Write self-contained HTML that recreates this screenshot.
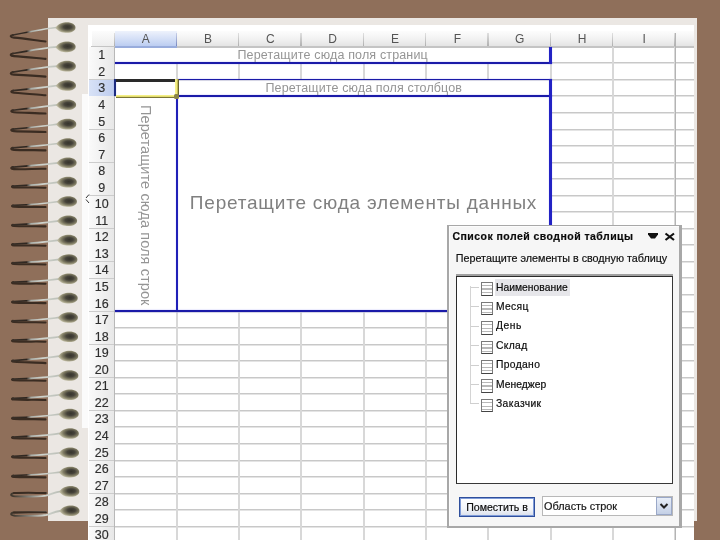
<!DOCTYPE html>
<html><head><meta charset="utf-8"><style>
html,body{margin:0;padding:0;}
body{width:720px;height:540px;overflow:hidden;position:relative;background:#8f6f5a;font-family:"Liberation Sans", sans-serif;}
.a{position:absolute;}
.t{position:absolute;white-space:nowrap;filter:grayscale(1);}
.tx{-webkit-text-stroke:0.2px #111;}
</style></head><body>

<div class="a" style="left:48px;top:18px;width:648.5px;height:502.5px;background:#ebe7e3;"></div>
<div class="a" style="left:82px;top:94px;width:8px;height:334px;background:#fbfbfb;"></div>
<div class="a" style="left:88px;top:25px;width:606px;height:515px;background:#ffffff;"></div>
<div class="a" style="left:92px;top:31px;width:22.50px;height:15.80px;background:linear-gradient(#fcfcfc,#ececec);"></div>
<div class="a" style="left:91px;top:46.3px;width:23.50px;height:1.7px;background:#c4c4c4;"></div>
<div class="a" style="left:114.50px;top:31px;width:62.33px;height:15.80px;background:linear-gradient(#eef2fc,#c9d7f4 70%,#b8caf0);"></div>
<div class="a" style="left:114.50px;top:46.3px;width:62.33px;height:1.7px;background:#98acdc;"></div>
<div class="t" style="left:114.50px;top:31.5px;width:62.33px;text-align:center;font-size:12px;line-height:15px;color:#555;">A</div>
<div class="a" style="left:176.83px;top:31px;width:62.33px;height:15.80px;background:linear-gradient(#fdfdfd,#f2f2f2 50%,#e2e2e2);"></div>
<div class="a" style="left:176.83px;top:46.3px;width:62.33px;height:1.7px;background:#c4c4c4;"></div>
<div class="t" style="left:176.83px;top:31.5px;width:62.33px;text-align:center;font-size:12px;line-height:15px;color:#555;">B</div>
<div class="a" style="left:239.16px;top:31px;width:62.33px;height:15.80px;background:linear-gradient(#fdfdfd,#f2f2f2 50%,#e2e2e2);"></div>
<div class="a" style="left:239.16px;top:46.3px;width:62.33px;height:1.7px;background:#c4c4c4;"></div>
<div class="t" style="left:239.16px;top:31.5px;width:62.33px;text-align:center;font-size:12px;line-height:15px;color:#555;">C</div>
<div class="a" style="left:301.49px;top:31px;width:62.33px;height:15.80px;background:linear-gradient(#fdfdfd,#f2f2f2 50%,#e2e2e2);"></div>
<div class="a" style="left:301.49px;top:46.3px;width:62.33px;height:1.7px;background:#c4c4c4;"></div>
<div class="t" style="left:301.49px;top:31.5px;width:62.33px;text-align:center;font-size:12px;line-height:15px;color:#555;">D</div>
<div class="a" style="left:363.82px;top:31px;width:62.33px;height:15.80px;background:linear-gradient(#fdfdfd,#f2f2f2 50%,#e2e2e2);"></div>
<div class="a" style="left:363.82px;top:46.3px;width:62.33px;height:1.7px;background:#c4c4c4;"></div>
<div class="t" style="left:363.82px;top:31.5px;width:62.33px;text-align:center;font-size:12px;line-height:15px;color:#555;">E</div>
<div class="a" style="left:426.15px;top:31px;width:62.33px;height:15.80px;background:linear-gradient(#fdfdfd,#f2f2f2 50%,#e2e2e2);"></div>
<div class="a" style="left:426.15px;top:46.3px;width:62.33px;height:1.7px;background:#c4c4c4;"></div>
<div class="t" style="left:426.15px;top:31.5px;width:62.33px;text-align:center;font-size:12px;line-height:15px;color:#555;">F</div>
<div class="a" style="left:488.48px;top:31px;width:62.33px;height:15.80px;background:linear-gradient(#fdfdfd,#f2f2f2 50%,#e2e2e2);"></div>
<div class="a" style="left:488.48px;top:46.3px;width:62.33px;height:1.7px;background:#c4c4c4;"></div>
<div class="t" style="left:488.48px;top:31.5px;width:62.33px;text-align:center;font-size:12px;line-height:15px;color:#555;">G</div>
<div class="a" style="left:550.81px;top:31px;width:62.33px;height:15.80px;background:linear-gradient(#fdfdfd,#f2f2f2 50%,#e2e2e2);"></div>
<div class="a" style="left:550.81px;top:46.3px;width:62.33px;height:1.7px;background:#c4c4c4;"></div>
<div class="t" style="left:550.81px;top:31.5px;width:62.33px;text-align:center;font-size:12px;line-height:15px;color:#555;">H</div>
<div class="a" style="left:613.14px;top:31px;width:62.33px;height:15.80px;background:linear-gradient(#fdfdfd,#f2f2f2 50%,#e2e2e2);"></div>
<div class="a" style="left:613.14px;top:46.3px;width:62.33px;height:1.7px;background:#c4c4c4;"></div>
<div class="t" style="left:613.14px;top:31.5px;width:62.33px;text-align:center;font-size:12px;line-height:15px;color:#555;">I</div>
<div class="a" style="left:675.47px;top:31px;width:18.53px;height:15.80px;background:linear-gradient(#fdfdfd,#f2f2f2 50%,#e2e2e2);"></div>
<div class="a" style="left:675.47px;top:46.3px;width:18.53px;height:1.7px;background:#c4c4c4;"></div>
<div class="a" style="left:113.50px;top:33px;width:1.2px;height:12.80px;background:linear-gradient(#e0e0e0,#b0b0b0);"></div>
<div class="a" style="left:175.83px;top:33px;width:1.2px;height:12.80px;background:linear-gradient(#c8d0e8,#7888c0);"></div>
<div class="a" style="left:238.16px;top:33px;width:1.2px;height:12.80px;background:linear-gradient(#e0e0e0,#b0b0b0);"></div>
<div class="a" style="left:300.49px;top:33px;width:1.2px;height:12.80px;background:linear-gradient(#e0e0e0,#b0b0b0);"></div>
<div class="a" style="left:362.82px;top:33px;width:1.2px;height:12.80px;background:linear-gradient(#e0e0e0,#b0b0b0);"></div>
<div class="a" style="left:425.15px;top:33px;width:1.2px;height:12.80px;background:linear-gradient(#e0e0e0,#b0b0b0);"></div>
<div class="a" style="left:487.48px;top:33px;width:1.2px;height:12.80px;background:linear-gradient(#e0e0e0,#b0b0b0);"></div>
<div class="a" style="left:549.81px;top:33px;width:1.2px;height:12.80px;background:linear-gradient(#e0e0e0,#b0b0b0);"></div>
<div class="a" style="left:612.14px;top:33px;width:1.2px;height:12.80px;background:linear-gradient(#e0e0e0,#b0b0b0);"></div>
<div class="a" style="left:674.47px;top:33px;width:1.2px;height:12.80px;background:linear-gradient(#e0e0e0,#b0b0b0);"></div>
<div class="a" style="left:89px;top:46.80px;width:25.50px;height:16.55px;background:linear-gradient(90deg,#fafafa,#e7e7e7);"></div>
<div class="a" style="left:89px;top:62.85px;width:25.50px;height:1.3px;background:#cccccc;"></div>
<div class="t" style="left:89px;top:47.30px;width:25.50px;text-align:center;font-size:12.5px;line-height:16px;color:#2e2e2e;-webkit-text-stroke:0.15px #2e2e2e;">1</div>
<div class="a" style="left:89px;top:63.35px;width:25.50px;height:16.55px;background:linear-gradient(90deg,#fafafa,#e7e7e7);"></div>
<div class="a" style="left:89px;top:79.40px;width:25.50px;height:1.3px;background:#cccccc;"></div>
<div class="t" style="left:89px;top:63.85px;width:25.50px;text-align:center;font-size:12.5px;line-height:16px;color:#2e2e2e;-webkit-text-stroke:0.15px #2e2e2e;">2</div>
<div class="a" style="left:89px;top:79.90px;width:25.50px;height:16.55px;background:linear-gradient(90deg,#d8e2f6,#bccbee);"></div>
<div class="a" style="left:89px;top:95.95px;width:25.50px;height:1.3px;background:#8fa3d6;"></div>
<div class="t" style="left:89px;top:80.40px;width:25.50px;text-align:center;font-size:12.5px;line-height:16px;color:#2e2e2e;-webkit-text-stroke:0.15px #2e2e2e;">3</div>
<div class="a" style="left:89px;top:96.45px;width:25.50px;height:16.55px;background:linear-gradient(90deg,#fafafa,#e7e7e7);"></div>
<div class="a" style="left:89px;top:112.50px;width:25.50px;height:1.3px;background:#cccccc;"></div>
<div class="t" style="left:89px;top:96.95px;width:25.50px;text-align:center;font-size:12.5px;line-height:16px;color:#2e2e2e;-webkit-text-stroke:0.15px #2e2e2e;">4</div>
<div class="a" style="left:89px;top:113.00px;width:25.50px;height:16.55px;background:linear-gradient(90deg,#fafafa,#e7e7e7);"></div>
<div class="a" style="left:89px;top:129.05px;width:25.50px;height:1.3px;background:#cccccc;"></div>
<div class="t" style="left:89px;top:113.50px;width:25.50px;text-align:center;font-size:12.5px;line-height:16px;color:#2e2e2e;-webkit-text-stroke:0.15px #2e2e2e;">5</div>
<div class="a" style="left:89px;top:129.55px;width:25.50px;height:16.55px;background:linear-gradient(90deg,#fafafa,#e7e7e7);"></div>
<div class="a" style="left:89px;top:145.60px;width:25.50px;height:1.3px;background:#cccccc;"></div>
<div class="t" style="left:89px;top:130.05px;width:25.50px;text-align:center;font-size:12.5px;line-height:16px;color:#2e2e2e;-webkit-text-stroke:0.15px #2e2e2e;">6</div>
<div class="a" style="left:89px;top:146.10px;width:25.50px;height:16.55px;background:linear-gradient(90deg,#fafafa,#e7e7e7);"></div>
<div class="a" style="left:89px;top:162.15px;width:25.50px;height:1.3px;background:#cccccc;"></div>
<div class="t" style="left:89px;top:146.60px;width:25.50px;text-align:center;font-size:12.5px;line-height:16px;color:#2e2e2e;-webkit-text-stroke:0.15px #2e2e2e;">7</div>
<div class="a" style="left:89px;top:162.65px;width:25.50px;height:16.55px;background:linear-gradient(90deg,#fafafa,#e7e7e7);"></div>
<div class="a" style="left:89px;top:178.70px;width:25.50px;height:1.3px;background:#cccccc;"></div>
<div class="t" style="left:89px;top:163.15px;width:25.50px;text-align:center;font-size:12.5px;line-height:16px;color:#2e2e2e;-webkit-text-stroke:0.15px #2e2e2e;">8</div>
<div class="a" style="left:89px;top:179.20px;width:25.50px;height:16.55px;background:linear-gradient(90deg,#fafafa,#e7e7e7);"></div>
<div class="a" style="left:89px;top:195.25px;width:25.50px;height:1.3px;background:#cccccc;"></div>
<div class="t" style="left:89px;top:179.70px;width:25.50px;text-align:center;font-size:12.5px;line-height:16px;color:#2e2e2e;-webkit-text-stroke:0.15px #2e2e2e;">9</div>
<div class="a" style="left:89px;top:195.75px;width:25.50px;height:16.55px;background:linear-gradient(90deg,#fafafa,#e7e7e7);"></div>
<div class="a" style="left:89px;top:211.80px;width:25.50px;height:1.3px;background:#cccccc;"></div>
<div class="t" style="left:89px;top:196.25px;width:25.50px;text-align:center;font-size:12.5px;line-height:16px;color:#2e2e2e;-webkit-text-stroke:0.15px #2e2e2e;">10</div>
<div class="a" style="left:89px;top:212.30px;width:25.50px;height:16.55px;background:linear-gradient(90deg,#fafafa,#e7e7e7);"></div>
<div class="a" style="left:89px;top:228.35px;width:25.50px;height:1.3px;background:#cccccc;"></div>
<div class="t" style="left:89px;top:212.80px;width:25.50px;text-align:center;font-size:12.5px;line-height:16px;color:#2e2e2e;-webkit-text-stroke:0.15px #2e2e2e;">11</div>
<div class="a" style="left:89px;top:228.85px;width:25.50px;height:16.55px;background:linear-gradient(90deg,#fafafa,#e7e7e7);"></div>
<div class="a" style="left:89px;top:244.90px;width:25.50px;height:1.3px;background:#cccccc;"></div>
<div class="t" style="left:89px;top:229.35px;width:25.50px;text-align:center;font-size:12.5px;line-height:16px;color:#2e2e2e;-webkit-text-stroke:0.15px #2e2e2e;">12</div>
<div class="a" style="left:89px;top:245.40px;width:25.50px;height:16.55px;background:linear-gradient(90deg,#fafafa,#e7e7e7);"></div>
<div class="a" style="left:89px;top:261.45px;width:25.50px;height:1.3px;background:#cccccc;"></div>
<div class="t" style="left:89px;top:245.90px;width:25.50px;text-align:center;font-size:12.5px;line-height:16px;color:#2e2e2e;-webkit-text-stroke:0.15px #2e2e2e;">13</div>
<div class="a" style="left:89px;top:261.95px;width:25.50px;height:16.55px;background:linear-gradient(90deg,#fafafa,#e7e7e7);"></div>
<div class="a" style="left:89px;top:278.00px;width:25.50px;height:1.3px;background:#cccccc;"></div>
<div class="t" style="left:89px;top:262.45px;width:25.50px;text-align:center;font-size:12.5px;line-height:16px;color:#2e2e2e;-webkit-text-stroke:0.15px #2e2e2e;">14</div>
<div class="a" style="left:89px;top:278.50px;width:25.50px;height:16.55px;background:linear-gradient(90deg,#fafafa,#e7e7e7);"></div>
<div class="a" style="left:89px;top:294.55px;width:25.50px;height:1.3px;background:#cccccc;"></div>
<div class="t" style="left:89px;top:279.00px;width:25.50px;text-align:center;font-size:12.5px;line-height:16px;color:#2e2e2e;-webkit-text-stroke:0.15px #2e2e2e;">15</div>
<div class="a" style="left:89px;top:295.05px;width:25.50px;height:16.55px;background:linear-gradient(90deg,#fafafa,#e7e7e7);"></div>
<div class="a" style="left:89px;top:311.10px;width:25.50px;height:1.3px;background:#cccccc;"></div>
<div class="t" style="left:89px;top:295.55px;width:25.50px;text-align:center;font-size:12.5px;line-height:16px;color:#2e2e2e;-webkit-text-stroke:0.15px #2e2e2e;">16</div>
<div class="a" style="left:89px;top:311.60px;width:25.50px;height:16.55px;background:linear-gradient(90deg,#fafafa,#e7e7e7);"></div>
<div class="a" style="left:89px;top:327.65px;width:25.50px;height:1.3px;background:#cccccc;"></div>
<div class="t" style="left:89px;top:312.10px;width:25.50px;text-align:center;font-size:12.5px;line-height:16px;color:#2e2e2e;-webkit-text-stroke:0.15px #2e2e2e;">17</div>
<div class="a" style="left:89px;top:328.15px;width:25.50px;height:16.55px;background:linear-gradient(90deg,#fafafa,#e7e7e7);"></div>
<div class="a" style="left:89px;top:344.20px;width:25.50px;height:1.3px;background:#cccccc;"></div>
<div class="t" style="left:89px;top:328.65px;width:25.50px;text-align:center;font-size:12.5px;line-height:16px;color:#2e2e2e;-webkit-text-stroke:0.15px #2e2e2e;">18</div>
<div class="a" style="left:89px;top:344.70px;width:25.50px;height:16.55px;background:linear-gradient(90deg,#fafafa,#e7e7e7);"></div>
<div class="a" style="left:89px;top:360.75px;width:25.50px;height:1.3px;background:#cccccc;"></div>
<div class="t" style="left:89px;top:345.20px;width:25.50px;text-align:center;font-size:12.5px;line-height:16px;color:#2e2e2e;-webkit-text-stroke:0.15px #2e2e2e;">19</div>
<div class="a" style="left:89px;top:361.25px;width:25.50px;height:16.55px;background:linear-gradient(90deg,#fafafa,#e7e7e7);"></div>
<div class="a" style="left:89px;top:377.30px;width:25.50px;height:1.3px;background:#cccccc;"></div>
<div class="t" style="left:89px;top:361.75px;width:25.50px;text-align:center;font-size:12.5px;line-height:16px;color:#2e2e2e;-webkit-text-stroke:0.15px #2e2e2e;">20</div>
<div class="a" style="left:89px;top:377.80px;width:25.50px;height:16.55px;background:linear-gradient(90deg,#fafafa,#e7e7e7);"></div>
<div class="a" style="left:89px;top:393.85px;width:25.50px;height:1.3px;background:#cccccc;"></div>
<div class="t" style="left:89px;top:378.30px;width:25.50px;text-align:center;font-size:12.5px;line-height:16px;color:#2e2e2e;-webkit-text-stroke:0.15px #2e2e2e;">21</div>
<div class="a" style="left:89px;top:394.35px;width:25.50px;height:16.55px;background:linear-gradient(90deg,#fafafa,#e7e7e7);"></div>
<div class="a" style="left:89px;top:410.40px;width:25.50px;height:1.3px;background:#cccccc;"></div>
<div class="t" style="left:89px;top:394.85px;width:25.50px;text-align:center;font-size:12.5px;line-height:16px;color:#2e2e2e;-webkit-text-stroke:0.15px #2e2e2e;">22</div>
<div class="a" style="left:89px;top:410.90px;width:25.50px;height:16.55px;background:linear-gradient(90deg,#fafafa,#e7e7e7);"></div>
<div class="a" style="left:89px;top:426.95px;width:25.50px;height:1.3px;background:#cccccc;"></div>
<div class="t" style="left:89px;top:411.40px;width:25.50px;text-align:center;font-size:12.5px;line-height:16px;color:#2e2e2e;-webkit-text-stroke:0.15px #2e2e2e;">23</div>
<div class="a" style="left:89px;top:427.45px;width:25.50px;height:16.55px;background:linear-gradient(90deg,#fafafa,#e7e7e7);"></div>
<div class="a" style="left:89px;top:443.50px;width:25.50px;height:1.3px;background:#cccccc;"></div>
<div class="t" style="left:89px;top:427.95px;width:25.50px;text-align:center;font-size:12.5px;line-height:16px;color:#2e2e2e;-webkit-text-stroke:0.15px #2e2e2e;">24</div>
<div class="a" style="left:89px;top:444.00px;width:25.50px;height:16.55px;background:linear-gradient(90deg,#fafafa,#e7e7e7);"></div>
<div class="a" style="left:89px;top:460.05px;width:25.50px;height:1.3px;background:#cccccc;"></div>
<div class="t" style="left:89px;top:444.50px;width:25.50px;text-align:center;font-size:12.5px;line-height:16px;color:#2e2e2e;-webkit-text-stroke:0.15px #2e2e2e;">25</div>
<div class="a" style="left:89px;top:460.55px;width:25.50px;height:16.55px;background:linear-gradient(90deg,#fafafa,#e7e7e7);"></div>
<div class="a" style="left:89px;top:476.60px;width:25.50px;height:1.3px;background:#cccccc;"></div>
<div class="t" style="left:89px;top:461.05px;width:25.50px;text-align:center;font-size:12.5px;line-height:16px;color:#2e2e2e;-webkit-text-stroke:0.15px #2e2e2e;">26</div>
<div class="a" style="left:89px;top:477.10px;width:25.50px;height:16.55px;background:linear-gradient(90deg,#fafafa,#e7e7e7);"></div>
<div class="a" style="left:89px;top:493.15px;width:25.50px;height:1.3px;background:#cccccc;"></div>
<div class="t" style="left:89px;top:477.60px;width:25.50px;text-align:center;font-size:12.5px;line-height:16px;color:#2e2e2e;-webkit-text-stroke:0.15px #2e2e2e;">27</div>
<div class="a" style="left:89px;top:493.65px;width:25.50px;height:16.55px;background:linear-gradient(90deg,#fafafa,#e7e7e7);"></div>
<div class="a" style="left:89px;top:509.70px;width:25.50px;height:1.3px;background:#cccccc;"></div>
<div class="t" style="left:89px;top:494.15px;width:25.50px;text-align:center;font-size:12.5px;line-height:16px;color:#2e2e2e;-webkit-text-stroke:0.15px #2e2e2e;">28</div>
<div class="a" style="left:89px;top:510.20px;width:25.50px;height:16.55px;background:linear-gradient(90deg,#fafafa,#e7e7e7);"></div>
<div class="a" style="left:89px;top:526.25px;width:25.50px;height:1.3px;background:#cccccc;"></div>
<div class="t" style="left:89px;top:510.70px;width:25.50px;text-align:center;font-size:12.5px;line-height:16px;color:#2e2e2e;-webkit-text-stroke:0.15px #2e2e2e;">29</div>
<div class="a" style="left:89px;top:526.75px;width:25.50px;height:16.55px;background:linear-gradient(90deg,#fafafa,#e7e7e7);"></div>
<div class="a" style="left:89px;top:542.80px;width:25.50px;height:1.3px;background:#cccccc;"></div>
<div class="t" style="left:89px;top:527.25px;width:25.50px;text-align:center;font-size:12.5px;line-height:16px;color:#2e2e2e;-webkit-text-stroke:0.15px #2e2e2e;">30</div>
<div class="a" style="left:113.50px;top:46.80px;width:1.7px;height:493.20px;background:#b8b8b8;"></div>
<div class="a" style="left:114.50px;top:62px;width:579.50px;height:2px;background:linear-gradient(#c8c8c8 50%,#e4e4e4 50%);"></div>
<div class="a" style="left:114.50px;top:79px;width:579.50px;height:2px;background:linear-gradient(#c8c8c8 50%,#e4e4e4 50%);"></div>
<div class="a" style="left:114.50px;top:95px;width:579.50px;height:2px;background:linear-gradient(#c8c8c8 50%,#e4e4e4 50%);"></div>
<div class="a" style="left:550.81px;top:112px;width:143.19px;height:2px;background:linear-gradient(#c8c8c8 50%,#e4e4e4 50%);"></div>
<div class="a" style="left:550.81px;top:129px;width:143.19px;height:2px;background:linear-gradient(#c8c8c8 50%,#e4e4e4 50%);"></div>
<div class="a" style="left:550.81px;top:145px;width:143.19px;height:2px;background:linear-gradient(#c8c8c8 50%,#e4e4e4 50%);"></div>
<div class="a" style="left:550.81px;top:162px;width:143.19px;height:2px;background:linear-gradient(#c8c8c8 50%,#e4e4e4 50%);"></div>
<div class="a" style="left:550.81px;top:178px;width:143.19px;height:2px;background:linear-gradient(#c8c8c8 50%,#e4e4e4 50%);"></div>
<div class="a" style="left:550.81px;top:195px;width:143.19px;height:2px;background:linear-gradient(#c8c8c8 50%,#e4e4e4 50%);"></div>
<div class="a" style="left:550.81px;top:211px;width:143.19px;height:2px;background:linear-gradient(#c8c8c8 50%,#e4e4e4 50%);"></div>
<div class="a" style="left:550.81px;top:228px;width:143.19px;height:2px;background:linear-gradient(#c8c8c8 50%,#e4e4e4 50%);"></div>
<div class="a" style="left:550.81px;top:244px;width:143.19px;height:2px;background:linear-gradient(#c8c8c8 50%,#e4e4e4 50%);"></div>
<div class="a" style="left:550.81px;top:261px;width:143.19px;height:2px;background:linear-gradient(#c8c8c8 50%,#e4e4e4 50%);"></div>
<div class="a" style="left:550.81px;top:277px;width:143.19px;height:2px;background:linear-gradient(#c8c8c8 50%,#e4e4e4 50%);"></div>
<div class="a" style="left:550.81px;top:294px;width:143.19px;height:2px;background:linear-gradient(#c8c8c8 50%,#e4e4e4 50%);"></div>
<div class="a" style="left:114.50px;top:311px;width:579.50px;height:2px;background:linear-gradient(#c8c8c8 50%,#e4e4e4 50%);"></div>
<div class="a" style="left:114.50px;top:327px;width:579.50px;height:2px;background:linear-gradient(#c8c8c8 50%,#e4e4e4 50%);"></div>
<div class="a" style="left:114.50px;top:344px;width:579.50px;height:2px;background:linear-gradient(#c8c8c8 50%,#e4e4e4 50%);"></div>
<div class="a" style="left:114.50px;top:360px;width:579.50px;height:2px;background:linear-gradient(#c8c8c8 50%,#e4e4e4 50%);"></div>
<div class="a" style="left:114.50px;top:377px;width:579.50px;height:2px;background:linear-gradient(#c8c8c8 50%,#e4e4e4 50%);"></div>
<div class="a" style="left:114.50px;top:393px;width:579.50px;height:2px;background:linear-gradient(#c8c8c8 50%,#e4e4e4 50%);"></div>
<div class="a" style="left:114.50px;top:410px;width:579.50px;height:2px;background:linear-gradient(#c8c8c8 50%,#e4e4e4 50%);"></div>
<div class="a" style="left:114.50px;top:426px;width:579.50px;height:2px;background:linear-gradient(#c8c8c8 50%,#e4e4e4 50%);"></div>
<div class="a" style="left:114.50px;top:443px;width:579.50px;height:2px;background:linear-gradient(#c8c8c8 50%,#e4e4e4 50%);"></div>
<div class="a" style="left:114.50px;top:460px;width:579.50px;height:2px;background:linear-gradient(#c8c8c8 50%,#e4e4e4 50%);"></div>
<div class="a" style="left:114.50px;top:476px;width:579.50px;height:2px;background:linear-gradient(#c8c8c8 50%,#e4e4e4 50%);"></div>
<div class="a" style="left:114.50px;top:493px;width:579.50px;height:2px;background:linear-gradient(#c8c8c8 50%,#e4e4e4 50%);"></div>
<div class="a" style="left:114.50px;top:509px;width:579.50px;height:2px;background:linear-gradient(#c8c8c8 50%,#e4e4e4 50%);"></div>
<div class="a" style="left:114.50px;top:526px;width:579.50px;height:2px;background:linear-gradient(#c8c8c8 50%,#e4e4e4 50%);"></div>
<div class="a" style="left:176px;top:63.35px;width:2px;height:16.55px;background:#d8d8d8;"></div>
<div class="a" style="left:176px;top:311.60px;width:2px;height:228.40px;background:#d8d8d8;"></div>
<div class="a" style="left:238px;top:63.35px;width:2px;height:16.55px;background:#d8d8d8;"></div>
<div class="a" style="left:238px;top:311.60px;width:2px;height:228.40px;background:#d8d8d8;"></div>
<div class="a" style="left:300px;top:63.35px;width:2px;height:16.55px;background:#d8d8d8;"></div>
<div class="a" style="left:300px;top:311.60px;width:2px;height:228.40px;background:#d8d8d8;"></div>
<div class="a" style="left:363px;top:63.35px;width:2px;height:16.55px;background:#d8d8d8;"></div>
<div class="a" style="left:363px;top:311.60px;width:2px;height:228.40px;background:#d8d8d8;"></div>
<div class="a" style="left:425px;top:63.35px;width:2px;height:16.55px;background:#d8d8d8;"></div>
<div class="a" style="left:425px;top:311.60px;width:2px;height:228.40px;background:#d8d8d8;"></div>
<div class="a" style="left:487px;top:63.35px;width:2px;height:16.55px;background:#d8d8d8;"></div>
<div class="a" style="left:487px;top:311.60px;width:2px;height:228.40px;background:#d8d8d8;"></div>
<div class="a" style="left:550px;top:46.80px;width:2px;height:493.20px;background:#d8d8d8;"></div>
<div class="a" style="left:612px;top:46.80px;width:2px;height:493.20px;background:#d8d8d8;"></div>
<div class="a" style="left:674px;top:46.80px;width:2px;height:493.20px;background:#d8d8d8;"></div>
<div class="a" style="left:674.97px;top:33px;width:1px;height:507px;background:#b4b4b4;"></div>
<div class="a" style="left:114.50px;top:62.00px;width:437.50px;height:1.8px;background:#1a1aa8;box-shadow:0 0 1.2px rgba(70,70,230,0.7);"></div>
<div class="a" style="left:549.30px;top:46.80px;width:2.4px;height:17.20px;background:#2222c4;box-shadow:0 0 1px rgba(70,70,230,0.6);"></div>
<div class="a" style="left:176.83px;top:78.50px;width:375.17px;height:1.8px;background:#1a1aa8;box-shadow:0 0 1.2px rgba(70,70,230,0.7);"></div>
<div class="a" style="left:176.83px;top:94.90px;width:375.17px;height:1.8px;background:#1a1aa8;box-shadow:0 0 1.2px rgba(70,70,230,0.7);"></div>
<div class="a" style="left:549.30px;top:78.50px;width:2.4px;height:233.30px;background:#2222c4;box-shadow:0 0 1px rgba(70,70,230,0.6);"></div>
<div class="a" style="left:175.50px;top:96.00px;width:2.2px;height:215.80px;background:#2020b8;box-shadow:0 0 1px rgba(70,70,230,0.6);"></div>
<div class="a" style="left:114.50px;top:309.95px;width:437.50px;height:1.9px;background:#1a1aa8;box-shadow:0 0 1.2px rgba(70,70,230,0.7);"></div>
<div class="a" style="left:114.30px;top:79.40px;width:2px;height:17.10px;background:#1c2c80;box-shadow:0 0 1px rgba(70,70,230,0.6);"></div>
<div class="a" style="left:115.50px;top:79.3px;width:60.83px;height:2.3px;background:#2a2a2a;"></div>
<div class="a" style="left:115.50px;top:94.5px;width:61.33px;height:3.8px;background:linear-gradient(#f8f490,#eee878 45%,#b0a848 70%,#3a3820);"></div>
<div class="a" style="left:175px;top:79.4px;width:3.8px;height:17px;background:linear-gradient(90deg,#f8f490,#eee878 45%,#b0a848 70%,#3a3820);"></div>
<div class="a" style="left:174.2px;top:93.8px;width:5px;height:5px;background:#8a8448;border-radius:1.5px;"></div>
<div class="t" style="left:114.50px;top:47.80px;width:436.31px;text-align:center;font-size:12.5px;letter-spacing:0.15px;line-height:15px;color:#959595;">Перетащите сюда поля страниц</div>
<div class="t" style="left:176.83px;top:80.90px;width:373.98px;text-align:center;font-size:12.5px;letter-spacing:0.13px;line-height:15px;color:#959595;">Перетащите сюда поля столбцов</div>
<div class="t" style="left:176.83px;top:192px;width:373.98px;text-align:center;font-size:19px;letter-spacing:0.78px;text-indent:-0.6px;line-height:22px;color:#808080;">Перетащите сюда элементы данных</div>
<div class="t" style="left:138px;top:105.2px;writing-mode:vertical-rl;font-size:14.5px;letter-spacing:0.1px;line-height:15px;color:#959595;">Перетащите сюда поля строк</div>
<div class="a" style="left:447px;top:224.8px;width:234.6px;height:303.2px;box-sizing:border-box;background:#a8a8a8;"></div>
<div class="a" style="left:449px;top:226px;width:230.3px;height:300.2px;background:#f6f6f6;"></div>
<div class="a" style="left:449px;top:226px;width:230px;height:1px;background:#fcfcfc;"></div>
<div class="a" style="left:449px;top:226px;width:1px;height:299px;background:#fcfcfc;"></div>
<div class="t tx" style="left:452.5px;top:230.3px;font-size:10.5px;font-weight:bold;letter-spacing:0.46px;line-height:13px;color:#0a0a0a;">Список полей сводной таблицы</div>
<svg class="a" style="left:645px;top:230px" width="40" height="14"><path d="M3,3 H13 V4.5 L10,8.5 H6 L3,4.5 Z" fill="#111"/><path d="M20.5,3.5 L29,10 M29,3.5 L20.5,10" stroke="#111" stroke-width="2.2"/></svg>
<div class="t tx" style="left:455.8px;top:252px;font-size:10.75px;line-height:13px;color:#111;">Перетащите элементы в сводную таблицу</div>
<div class="a" style="left:456px;top:274.2px;width:216.5px;height:1.4px;background:#a0a0a0;"></div>
<div class="a" style="left:456px;top:275.5px;width:216.5px;height:208.5px;box-sizing:border-box;background:#fff;border:1.8px solid #2a2a2a;border-top-width:1.6px;border-right-color:#383838;border-bottom-color:#383838;"></div>
<div class="a" style="left:469.5px;top:286.70px;width:9px;height:1px;background:#cfcfcf;"></div>
<div class="a" style="left:481px;top:282.20px;width:12px;height:13.5px;box-sizing:border-box;border:1px solid #7a7a7a;border-bottom:1.5px solid #444;background:linear-gradient(#fff 0,#fff 2px,#b8b8b8 2px,#b8b8b8 3.2px,#fff 3.2px,#fff 5.5px,#b8b8b8 5.5px,#b8b8b8 6.7px,#fff 6.7px,#fff 9px,#b8b8b8 9px,#b8b8b8 10.2px,#fff 10.2px);"></div>
<div class="a" style="left:495px;top:279.00px;width:75px;height:17px;background:#e6e6ea;"></div>
<div class="t tx" style="left:496px;top:280.50px;font-size:10.3px;letter-spacing:0.03px;line-height:13px;color:#0a0a0a;">Наименование</div>
<div class="a" style="left:469.5px;top:306.15px;width:9px;height:1px;background:#cfcfcf;"></div>
<div class="a" style="left:481px;top:301.65px;width:12px;height:13.5px;box-sizing:border-box;border:1px solid #7a7a7a;border-bottom:1.5px solid #444;background:linear-gradient(#fff 0,#fff 2px,#b8b8b8 2px,#b8b8b8 3.2px,#fff 3.2px,#fff 5.5px,#b8b8b8 5.5px,#b8b8b8 6.7px,#fff 6.7px,#fff 9px,#b8b8b8 9px,#b8b8b8 10.2px,#fff 10.2px);"></div>
<div class="t tx" style="left:496px;top:299.95px;font-size:10.3px;letter-spacing:0.35px;line-height:13px;color:#0a0a0a;">Месяц</div>
<div class="a" style="left:469.5px;top:325.60px;width:9px;height:1px;background:#cfcfcf;"></div>
<div class="a" style="left:481px;top:321.10px;width:12px;height:13.5px;box-sizing:border-box;border:1px solid #7a7a7a;border-bottom:1.5px solid #444;background:linear-gradient(#fff 0,#fff 2px,#b8b8b8 2px,#b8b8b8 3.2px,#fff 3.2px,#fff 5.5px,#b8b8b8 5.5px,#b8b8b8 6.7px,#fff 6.7px,#fff 9px,#b8b8b8 9px,#b8b8b8 10.2px,#fff 10.2px);"></div>
<div class="t tx" style="left:496px;top:319.40px;font-size:10.3px;letter-spacing:0.5px;line-height:13px;color:#0a0a0a;">День</div>
<div class="a" style="left:469.5px;top:345.05px;width:9px;height:1px;background:#cfcfcf;"></div>
<div class="a" style="left:481px;top:340.55px;width:12px;height:13.5px;box-sizing:border-box;border:1px solid #7a7a7a;border-bottom:1.5px solid #444;background:linear-gradient(#fff 0,#fff 2px,#b8b8b8 2px,#b8b8b8 3.2px,#fff 3.2px,#fff 5.5px,#b8b8b8 5.5px,#b8b8b8 6.7px,#fff 6.7px,#fff 9px,#b8b8b8 9px,#b8b8b8 10.2px,#fff 10.2px);"></div>
<div class="t tx" style="left:496px;top:338.85px;font-size:10.3px;letter-spacing:0.35px;line-height:13px;color:#0a0a0a;">Склад</div>
<div class="a" style="left:469.5px;top:364.50px;width:9px;height:1px;background:#cfcfcf;"></div>
<div class="a" style="left:481px;top:360.00px;width:12px;height:13.5px;box-sizing:border-box;border:1px solid #7a7a7a;border-bottom:1.5px solid #444;background:linear-gradient(#fff 0,#fff 2px,#b8b8b8 2px,#b8b8b8 3.2px,#fff 3.2px,#fff 5.5px,#b8b8b8 5.5px,#b8b8b8 6.7px,#fff 6.7px,#fff 9px,#b8b8b8 9px,#b8b8b8 10.2px,#fff 10.2px);"></div>
<div class="t tx" style="left:496px;top:358.30px;font-size:10.3px;letter-spacing:0.35px;line-height:13px;color:#0a0a0a;">Продано</div>
<div class="a" style="left:469.5px;top:383.95px;width:9px;height:1px;background:#cfcfcf;"></div>
<div class="a" style="left:481px;top:379.45px;width:12px;height:13.5px;box-sizing:border-box;border:1px solid #7a7a7a;border-bottom:1.5px solid #444;background:linear-gradient(#fff 0,#fff 2px,#b8b8b8 2px,#b8b8b8 3.2px,#fff 3.2px,#fff 5.5px,#b8b8b8 5.5px,#b8b8b8 6.7px,#fff 6.7px,#fff 9px,#b8b8b8 9px,#b8b8b8 10.2px,#fff 10.2px);"></div>
<div class="t tx" style="left:496px;top:377.75px;font-size:10.3px;letter-spacing:0.05px;line-height:13px;color:#0a0a0a;">Менеджер</div>
<div class="a" style="left:469.5px;top:403.40px;width:9px;height:1px;background:#cfcfcf;"></div>
<div class="a" style="left:481px;top:398.90px;width:12px;height:13.5px;box-sizing:border-box;border:1px solid #7a7a7a;border-bottom:1.5px solid #444;background:linear-gradient(#fff 0,#fff 2px,#b8b8b8 2px,#b8b8b8 3.2px,#fff 3.2px,#fff 5.5px,#b8b8b8 5.5px,#b8b8b8 6.7px,#fff 6.7px,#fff 9px,#b8b8b8 9px,#b8b8b8 10.2px,#fff 10.2px);"></div>
<div class="t tx" style="left:496px;top:397.20px;font-size:10.3px;letter-spacing:0.4px;line-height:13px;color:#0a0a0a;">Заказчик</div>
<div class="a" style="left:469.5px;top:286.2px;width:1px;height:117.20px;background:#d4d4d4;"></div>
<div class="a" style="left:458.75px;top:497px;width:76.25px;height:20px;box-sizing:border-box;border:1px solid #2f4f9c;background:linear-gradient(#ffffff,#f4f6fa 60%,#d8deea);box-shadow:inset 0 0 0 1px #7f9bd8;"></div>
<div class="t tx" style="left:459px;top:500.5px;width:76px;text-align:center;font-size:10.6px;line-height:13px;color:#0a0a0a;">Поместить в</div>
<div class="a" style="left:541.5px;top:495.5px;width:131px;height:20.5px;box-sizing:border-box;border:1.5px solid #b8b8b8;background:#fff;"></div>
<div class="t tx" style="left:544px;top:500px;font-size:10.9px;line-height:13px;color:#1a1a1a;">Область строк</div>
<div class="a" style="left:655.5px;top:496.5px;width:16px;height:18.5px;box-sizing:border-box;border:1px solid #9aa8c8;background:linear-gradient(#e8eef8,#c4d0e6);"></div>
<svg class="a" style="left:655.5px;top:496.5px" width="16" height="18"><path d="M4.5,7 L8,10.5 L11.5,7" fill="none" stroke="#222" stroke-width="2"/></svg>
<svg class="a" style="left:83px;top:192px" width="10" height="14"><path d="M6,2.5 L3,6 M3,7.5 L6,11" stroke="#333" stroke-width="1"/></svg>
<svg class="a" style="left:0;top:0;filter:blur(0.4px)" width="720" height="540"><defs><radialGradient id="hg" cx="0.6" cy="0.45" r="0.55"><stop offset="0" stop-color="#36342c"/><stop offset="0.35" stop-color="#46433a"/><stop offset="0.7" stop-color="#7e7a62"/><stop offset="1" stop-color="#b8b49a"/></radialGradient><linearGradient id="wg" x1="13" y1="0" x2="58" y2="0" gradientUnits="userSpaceOnUse"><stop offset="0" stop-color="#3a3028"/><stop offset="0.3" stop-color="#2e2620"/><stop offset="0.4" stop-color="#a8aca6"/><stop offset="0.65" stop-color="#d0d4ce"/><stop offset="1" stop-color="#bcc0b8"/></linearGradient><linearGradient id="wg2" x1="13" y1="0" x2="58" y2="0" gradientUnits="userSpaceOnUse"><stop offset="0" stop-color="#40382e"/><stop offset="0.4" stop-color="#8a8a82"/><stop offset="0.7" stop-color="#d0d4ce"/><stop offset="1" stop-color="#bcc0b8"/></linearGradient></defs><g transform="translate(0,27.50)"><path d="M13,7.50 C9.62,8.28 10.14,9.84 14,10.10 C25,10.70 38,13.40 45.5,14.00" fill="none" stroke="#3a2c22" stroke-width="2.1" stroke-linecap="round"/><path d="M57.00,0 C50,0.45 46,0.90 13,7.50" fill="none" stroke="url(#wg)" stroke-width="1.7" stroke-linecap="round"/><path transform="translate(55.50,0)" d="M0,0.3 C2.5,-3.8 7,-5.3 11.5,-5.3 C16.5,-5.3 20,-2.8 20,0 C20,3.2 16.5,5.3 11.5,5.3 C6.5,5.3 2.5,4 0,0.3 Z" fill="url(#hg)"/></g><g transform="translate(0,46.83)"><path d="M13,6.70 C9.62,7.48 10.14,9.04 14,9.30 C25,9.90 38,11.40 45.5,12.00" fill="none" stroke="#3a2c22" stroke-width="2.1" stroke-linecap="round"/><path d="M57.16,0 C50,0.35 46,0.70 13,6.70" fill="none" stroke="url(#wg)" stroke-width="1.7" stroke-linecap="round"/><path transform="translate(55.66,0)" d="M0,0.3 C2.5,-3.8 7,-5.3 11.5,-5.3 C16.5,-5.3 20,-2.8 20,0 C20,3.2 16.5,5.3 11.5,5.3 C6.5,5.3 2.5,4 0,0.3 Z" fill="url(#hg)"/></g><g transform="translate(0,66.16)"><path d="M13,5.90 C9.62,6.68 10.14,8.24 14,8.50 C25,9.10 38,9.90 45.5,10.50" fill="none" stroke="#3a2c22" stroke-width="2.1" stroke-linecap="round"/><path d="M57.32,0 C50,0.40 46,0.80 13,5.90" fill="none" stroke="url(#wg)" stroke-width="1.7" stroke-linecap="round"/><path transform="translate(55.82,0)" d="M0,0.3 C2.5,-3.8 7,-5.3 11.5,-5.3 C16.5,-5.3 20,-2.8 20,0 C20,3.2 16.5,5.3 11.5,5.3 C6.5,5.3 2.5,4 0,0.3 Z" fill="url(#hg)"/></g><g transform="translate(0,85.49)"><path d="M13,5.20 C10.40,5.80 10.80,7.00 14,7.20 C25,7.80 38,9.20 45.5,9.80" fill="none" stroke="#3a2c22" stroke-width="2.1" stroke-linecap="round"/><path d="M57.48,0 C50,0.95 46,1.90 13,5.20" fill="none" stroke="url(#wg)" stroke-width="1.7" stroke-linecap="round"/><path transform="translate(55.98,0)" d="M0,0.3 C2.5,-3.8 7,-5.3 11.5,-5.3 C16.5,-5.3 20,-2.8 20,0 C20,3.2 16.5,5.3 11.5,5.3 C6.5,5.3 2.5,4 0,0.3 Z" fill="url(#hg)"/></g><g transform="translate(0,104.82)"><path d="M13,5.40 C10.40,6.00 10.80,7.20 14,7.40 C25,8.00 38,8.15 45.5,8.75" fill="none" stroke="#3a2c22" stroke-width="2.1" stroke-linecap="round"/><path d="M57.64,0 C50,0.90 46,1.80 13,5.40" fill="none" stroke="url(#wg)" stroke-width="1.7" stroke-linecap="round"/><path transform="translate(56.14,0)" d="M0,0.3 C2.5,-3.8 7,-5.3 11.5,-5.3 C16.5,-5.3 20,-2.8 20,0 C20,3.2 16.5,5.3 11.5,5.3 C6.5,5.3 2.5,4 0,0.3 Z" fill="url(#hg)"/></g><g transform="translate(0,124.15)"><path d="M13,5.00 C10.40,5.60 10.80,6.80 14,7.00 C25,7.60 38,7.30 45.5,7.90" fill="none" stroke="#3a2c22" stroke-width="2.1" stroke-linecap="round"/><path d="M57.80,0 C50,1.00 46,2.00 13,5.00" fill="none" stroke="url(#wg)" stroke-width="1.7" stroke-linecap="round"/><path transform="translate(56.30,0)" d="M0,0.3 C2.5,-3.8 7,-5.3 11.5,-5.3 C16.5,-5.3 20,-2.8 20,0 C20,3.2 16.5,5.3 11.5,5.3 C6.5,5.3 2.5,4 0,0.3 Z" fill="url(#hg)"/></g><g transform="translate(0,143.48)"><path d="M13,4.40 C10.40,5.00 10.80,6.20 14,6.40 C25,7.00 38,6.30 45.5,6.90" fill="none" stroke="#3a2c22" stroke-width="2.1" stroke-linecap="round"/><path d="M57.96,0 C50,0.95 46,1.90 13,4.40" fill="none" stroke="url(#wg)" stroke-width="1.7" stroke-linecap="round"/><path transform="translate(56.46,0)" d="M0,0.3 C2.5,-3.8 7,-5.3 11.5,-5.3 C16.5,-5.3 20,-2.8 20,0 C20,3.2 16.5,5.3 11.5,5.3 C6.5,5.3 2.5,4 0,0.3 Z" fill="url(#hg)"/></g><g transform="translate(0,162.81)"><path d="M13,4.30 C10.40,4.90 10.80,6.10 14,6.30 C25,6.90 38,5.40 45.5,6.00" fill="none" stroke="#3a2c22" stroke-width="2.1" stroke-linecap="round"/><path d="M58.12,0 C50,0.90 46,1.80 13,4.30" fill="none" stroke="url(#wg)" stroke-width="1.7" stroke-linecap="round"/><path transform="translate(56.62,0)" d="M0,0.3 C2.5,-3.8 7,-5.3 11.5,-5.3 C16.5,-5.3 20,-2.8 20,0 C20,3.2 16.5,5.3 11.5,5.3 C6.5,5.3 2.5,4 0,0.3 Z" fill="url(#hg)"/></g><g transform="translate(0,182.14)"><path d="M13,4.00 C11.44,4.36 11.68,5.08 14,5.20 C25,5.80 38,5.00 45.5,5.60" fill="none" stroke="#3a2c22" stroke-width="2.1" stroke-linecap="round"/><path d="M58.28,0 C50,1.20 46,2.40 13,4.00" fill="none" stroke="url(#wg)" stroke-width="1.7" stroke-linecap="round"/><path transform="translate(56.78,0)" d="M0,0.3 C2.5,-3.8 7,-5.3 11.5,-5.3 C16.5,-5.3 20,-2.8 20,0 C20,3.2 16.5,5.3 11.5,5.3 C6.5,5.3 2.5,4 0,0.3 Z" fill="url(#hg)"/></g><g transform="translate(0,201.47)"><path d="M13,4.00 C11.44,4.36 11.68,5.08 14,5.20 C25,5.80 38,5.00 45.5,5.60" fill="none" stroke="#3a2c22" stroke-width="2.1" stroke-linecap="round"/><path d="M58.44,0 C50,1.20 46,2.40 13,4.00" fill="none" stroke="url(#wg)" stroke-width="1.7" stroke-linecap="round"/><path transform="translate(56.94,0)" d="M0,0.3 C2.5,-3.8 7,-5.3 11.5,-5.3 C16.5,-5.3 20,-2.8 20,0 C20,3.2 16.5,5.3 11.5,5.3 C6.5,5.3 2.5,4 0,0.3 Z" fill="url(#hg)"/></g><g transform="translate(0,220.80)"><path d="M13,4.00 C11.44,4.36 11.68,5.08 14,5.20 C25,5.80 38,5.00 45.5,5.60" fill="none" stroke="#3a2c22" stroke-width="2.1" stroke-linecap="round"/><path d="M58.60,0 C50,1.20 46,2.40 13,4.00" fill="none" stroke="url(#wg)" stroke-width="1.7" stroke-linecap="round"/><path transform="translate(57.10,0)" d="M0,0.3 C2.5,-3.8 7,-5.3 11.5,-5.3 C16.5,-5.3 20,-2.8 20,0 C20,3.2 16.5,5.3 11.5,5.3 C6.5,5.3 2.5,4 0,0.3 Z" fill="url(#hg)"/></g><g transform="translate(0,240.13)"><path d="M13,4.00 C11.44,4.36 11.68,5.08 14,5.20 C25,5.80 38,5.00 45.5,5.60" fill="none" stroke="#3a2c22" stroke-width="2.1" stroke-linecap="round"/><path d="M58.76,0 C50,1.20 46,2.40 13,4.00" fill="none" stroke="url(#wg)" stroke-width="1.7" stroke-linecap="round"/><path transform="translate(57.26,0)" d="M0,0.3 C2.5,-3.8 7,-5.3 11.5,-5.3 C16.5,-5.3 20,-2.8 20,0 C20,3.2 16.5,5.3 11.5,5.3 C6.5,5.3 2.5,4 0,0.3 Z" fill="url(#hg)"/></g><g transform="translate(0,259.46)"><path d="M13,3.40 C11.44,3.76 11.68,4.48 14,4.60 C25,5.20 38,4.40 45.5,5.00" fill="none" stroke="#3a2c22" stroke-width="2.1" stroke-linecap="round"/><path d="M58.92,0 C50,1.10 46,2.20 13,3.40" fill="none" stroke="url(#wg)" stroke-width="1.7" stroke-linecap="round"/><path transform="translate(57.42,0)" d="M0,0.3 C2.5,-3.8 7,-5.3 11.5,-5.3 C16.5,-5.3 20,-2.8 20,0 C20,3.2 16.5,5.3 11.5,5.3 C6.5,5.3 2.5,4 0,0.3 Z" fill="url(#hg)"/></g><g transform="translate(0,278.79)"><path d="M13,3.40 C11.44,3.76 11.68,4.48 14,4.60 C25,5.20 38,4.40 45.5,5.00" fill="none" stroke="#3a2c22" stroke-width="2.1" stroke-linecap="round"/><path d="M59.08,0 C50,1.10 46,2.20 13,3.40" fill="none" stroke="url(#wg)" stroke-width="1.7" stroke-linecap="round"/><path transform="translate(57.58,0)" d="M0,0.3 C2.5,-3.8 7,-5.3 11.5,-5.3 C16.5,-5.3 20,-2.8 20,0 C20,3.2 16.5,5.3 11.5,5.3 C6.5,5.3 2.5,4 0,0.3 Z" fill="url(#hg)"/></g><g transform="translate(0,298.12)"><path d="M13,3.40 C11.44,3.76 11.68,4.48 14,4.60 C25,5.20 38,4.40 45.5,5.00" fill="none" stroke="#3a2c22" stroke-width="2.1" stroke-linecap="round"/><path d="M59.24,0 C50,1.10 46,2.20 13,3.40" fill="none" stroke="url(#wg)" stroke-width="1.7" stroke-linecap="round"/><path transform="translate(57.74,0)" d="M0,0.3 C2.5,-3.8 7,-5.3 11.5,-5.3 C16.5,-5.3 20,-2.8 20,0 C20,3.2 16.5,5.3 11.5,5.3 C6.5,5.3 2.5,4 0,0.3 Z" fill="url(#hg)"/></g><g transform="translate(0,317.45)"><path d="M13,3.40 C11.44,3.76 11.68,4.48 14,4.60 C25,5.20 38,4.40 45.5,5.00" fill="none" stroke="#3a2c22" stroke-width="2.1" stroke-linecap="round"/><path d="M59.40,0 C50,1.10 46,2.20 13,3.40" fill="none" stroke="url(#wg)" stroke-width="1.7" stroke-linecap="round"/><path transform="translate(57.90,0)" d="M0,0.3 C2.5,-3.8 7,-5.3 11.5,-5.3 C16.5,-5.3 20,-2.8 20,0 C20,3.2 16.5,5.3 11.5,5.3 C6.5,5.3 2.5,4 0,0.3 Z" fill="url(#hg)"/></g><g transform="translate(0,336.78)"><path d="M13,3.40 C11.44,3.76 11.68,4.48 14,4.60 C25,5.20 38,4.40 45.5,5.00" fill="none" stroke="#3a2c22" stroke-width="2.1" stroke-linecap="round"/><path d="M59.56,0 C50,1.10 46,2.20 13,3.40" fill="none" stroke="url(#wg)" stroke-width="1.7" stroke-linecap="round"/><path transform="translate(58.06,0)" d="M0,0.3 C2.5,-3.8 7,-5.3 11.5,-5.3 C16.5,-5.3 20,-2.8 20,0 C20,3.2 16.5,5.3 11.5,5.3 C6.5,5.3 2.5,4 0,0.3 Z" fill="url(#hg)"/></g><g transform="translate(0,356.11)"><path d="M13,4.50 C11.44,4.86 11.68,5.58 14,5.70 C25,6.30 38,6.40 45.5,7.00" fill="none" stroke="#3a2c22" stroke-width="2.1" stroke-linecap="round"/><path d="M59.72,0 C50,1.10 46,2.20 13,4.50" fill="none" stroke="url(#wg)" stroke-width="1.7" stroke-linecap="round"/><path transform="translate(58.22,0)" d="M0,0.3 C2.5,-3.8 7,-5.3 11.5,-5.3 C16.5,-5.3 20,-2.8 20,0 C20,3.2 16.5,5.3 11.5,5.3 C6.5,5.3 2.5,4 0,0.3 Z" fill="url(#hg)"/></g><g transform="translate(0,375.44)"><path d="M13,3.60 C11.44,3.96 11.68,4.68 14,4.80 C25,5.40 38,4.70 45.5,5.30" fill="none" stroke="#3a2c22" stroke-width="2.1" stroke-linecap="round"/><path d="M59.88,0 C50,1.15 46,2.30 13,3.60" fill="none" stroke="url(#wg)" stroke-width="1.7" stroke-linecap="round"/><path transform="translate(58.38,0)" d="M0,0.3 C2.5,-3.8 7,-5.3 11.5,-5.3 C16.5,-5.3 20,-2.8 20,0 C20,3.2 16.5,5.3 11.5,5.3 C6.5,5.3 2.5,4 0,0.3 Z" fill="url(#hg)"/></g><g transform="translate(0,394.77)"><path d="M13,3.60 C11.44,3.96 11.68,4.68 14,4.80 C25,5.40 38,4.70 45.5,5.30" fill="none" stroke="#3a2c22" stroke-width="2.1" stroke-linecap="round"/><path d="M60.04,0 C50,1.15 46,2.30 13,3.60" fill="none" stroke="url(#wg)" stroke-width="1.7" stroke-linecap="round"/><path transform="translate(58.54,0)" d="M0,0.3 C2.5,-3.8 7,-5.3 11.5,-5.3 C16.5,-5.3 20,-2.8 20,0 C20,3.2 16.5,5.3 11.5,5.3 C6.5,5.3 2.5,4 0,0.3 Z" fill="url(#hg)"/></g><g transform="translate(0,414.10)"><path d="M13,3.60 C11.44,3.96 11.68,4.68 14,4.80 C25,5.40 38,4.70 45.5,5.30" fill="none" stroke="#3a2c22" stroke-width="2.1" stroke-linecap="round"/><path d="M60.20,0 C50,1.15 46,2.30 13,3.60" fill="none" stroke="url(#wg)" stroke-width="1.7" stroke-linecap="round"/><path transform="translate(58.70,0)" d="M0,0.3 C2.5,-3.8 7,-5.3 11.5,-5.3 C16.5,-5.3 20,-2.8 20,0 C20,3.2 16.5,5.3 11.5,5.3 C6.5,5.3 2.5,4 0,0.3 Z" fill="url(#hg)"/></g><g transform="translate(0,433.43)"><path d="M13,3.60 C11.44,3.96 11.68,4.68 14,4.80 C25,5.40 38,4.70 45.5,5.30" fill="none" stroke="#3a2c22" stroke-width="2.1" stroke-linecap="round"/><path d="M60.36,0 C50,1.15 46,2.30 13,3.60" fill="none" stroke="url(#wg)" stroke-width="1.7" stroke-linecap="round"/><path transform="translate(58.86,0)" d="M0,0.3 C2.5,-3.8 7,-5.3 11.5,-5.3 C16.5,-5.3 20,-2.8 20,0 C20,3.2 16.5,5.3 11.5,5.3 C6.5,5.3 2.5,4 0,0.3 Z" fill="url(#hg)"/></g><g transform="translate(0,452.76)"><path d="M13,3.60 C11.44,3.96 11.68,4.68 14,4.80 C25,5.40 38,4.70 45.5,5.30" fill="none" stroke="#3a2c22" stroke-width="2.1" stroke-linecap="round"/><path d="M60.52,0 C50,1.15 46,2.30 13,3.60" fill="none" stroke="url(#wg)" stroke-width="1.7" stroke-linecap="round"/><path transform="translate(59.02,0)" d="M0,0.3 C2.5,-3.8 7,-5.3 11.5,-5.3 C16.5,-5.3 20,-2.8 20,0 C20,3.2 16.5,5.3 11.5,5.3 C6.5,5.3 2.5,4 0,0.3 Z" fill="url(#hg)"/></g><g transform="translate(0,472.09)"><path d="M13,3.60 C11.44,3.96 11.68,4.68 14,4.80 C25,5.40 38,4.70 45.5,5.30" fill="none" stroke="#3a2c22" stroke-width="2.1" stroke-linecap="round"/><path d="M60.68,0 C50,1.15 46,2.30 13,3.60" fill="none" stroke="url(#wg)" stroke-width="1.7" stroke-linecap="round"/><path transform="translate(59.18,0)" d="M0,0.3 C2.5,-3.8 7,-5.3 11.5,-5.3 C16.5,-5.3 20,-2.8 20,0 C20,3.2 16.5,5.3 11.5,5.3 C6.5,5.3 2.5,4 0,0.3 Z" fill="url(#hg)"/></g><g transform="translate(0,491.42)"><path d="M46,1.50 C35,1.50 20,1.20 14,1.70 C10,2.30 10,4.50 15,5.00 C28,5.30 40,5.00 46,4.20 C50,3.50 53,1 60.84,0" fill="none" stroke="url(#wg2)" stroke-width="1.9" stroke-linecap="round"/><path d="M46,1.50 C35,1.50 20,1.20 14,1.70" fill="none" stroke="#3a2c22" stroke-width="2" stroke-linecap="round"/><path transform="translate(59.34,0)" d="M0,0.3 C2.5,-3.8 7,-5.3 11.5,-5.3 C16.5,-5.3 20,-2.8 20,0 C20,3.2 16.5,5.3 11.5,5.3 C6.5,5.3 2.5,4 0,0.3 Z" fill="url(#hg)"/></g><g transform="translate(0,510.75)"><path d="M46,1.50 C35,1.50 20,1.20 14,1.70 C10,2.30 10,4.50 15,5.00 C28,5.30 40,5.00 46,4.20 C50,3.50 53,1 61.00,0" fill="none" stroke="url(#wg2)" stroke-width="1.9" stroke-linecap="round"/><path d="M46,1.50 C35,1.50 20,1.20 14,1.70" fill="none" stroke="#3a2c22" stroke-width="2" stroke-linecap="round"/><path transform="translate(59.50,0)" d="M0,0.3 C2.5,-3.8 7,-5.3 11.5,-5.3 C16.5,-5.3 20,-2.8 20,0 C20,3.2 16.5,5.3 11.5,5.3 C6.5,5.3 2.5,4 0,0.3 Z" fill="url(#hg)"/></g></svg>
</body></html>
